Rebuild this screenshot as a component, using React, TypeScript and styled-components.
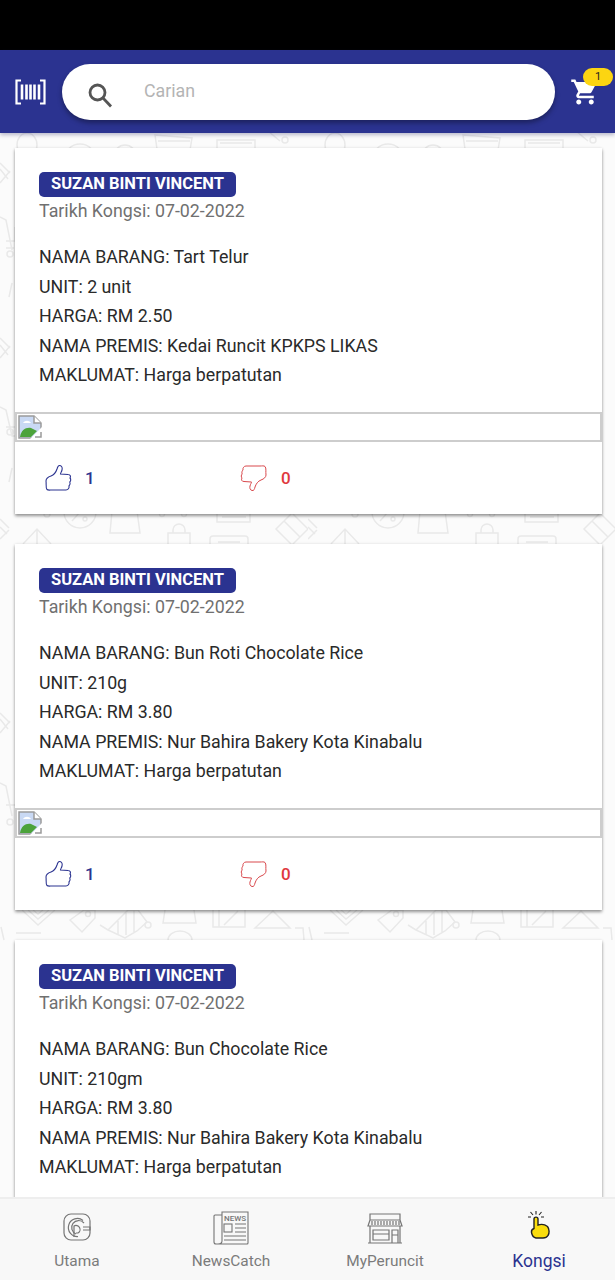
import React from 'react';
import styled, { createGlobalStyle } from 'styled-components';

// wallpaper tile, y = 0 sits right under the header
const pattern = encodeURIComponent(`<svg xmlns="http://www.w3.org/2000/svg" width="308" height="1064" viewBox="0 0 308 1064" fill="none" stroke="#e9e9e9" stroke-width="1.500">
<ellipse cx="27" cy="12" rx="10" ry="12"/><path d="M155 2l37 3-3 18h-31zM158 8h32"/><circle cx="80" cy="27" r="16"/><circle cx="125" cy="23" r="11"/><path d="M217 7h38v20h-38zM220 10h32"/><path d="M268-2l12 10"/><circle cx="285" cy="7" r="3"/>
<path d="M0 30l10 10M0 50l10-12M0 36l8 10"/><path d="M0 84l6 3 6 30M6 108h9v-14M6 115h8"/><circle cx="10" cy="121" r="3"/><path d="M12 150l-3 14"/>
<path d="M0 205l10 10M0 225l10-12M0 212l8 10"/><path d="M0 274l6 3 6 26h4M6 294h9"/><circle cx="10" cy="299" r="3"/><path d="M12 335l-3 14"/>
<circle cx="80" cy="379" r="16"/><path d="M72 388l16-18"/><circle cx="75" cy="376" r="2"/><circle cx="85" cy="386" r="2"/><path d="M112 378l-2 22h30l-3-22"/><circle cx="47" cy="381" r="3"/><circle cx="162" cy="381" r="2.500"/><circle cx="184" cy="381" r="2.500"/><path d="M217 378v11h33v-11M222 384h24"/>
<path d="M0 386l9 9M0 406l9-9M0 394l7 7"/>
<path d="M23 411l14-15 14 15M37 397v14"/><path d="M168 411v-11h22v11M173 400v-3a6 6 0 0 1 12 0v3"/><path d="M210 411v-5q0-3 3-3h32q3 0 3 3v5M218 409h22"/>
<path d="M276 396l16-16 16 16-16 16zM284 388l16 16M292 380l-8 8"/>
<path d="M0 580l10 10M0 600l10-12M0 586l8 10"/><path d="M0 650l6 3 6 30M6 672h9"/><circle cx="10" cy="689" r="3"/>
<path d="M22 777l16 15 17-15M28 777l10 9 11-9M33 777l5 4 5-4"/><path d="M70 787l12 12 13-14v-8h-11z"/><circle cx="88" cy="781" r="2.500"/>
<path d="M100 792l8 5M108 797l20-20h10l9 12-10 9-12 7zM118 788v14M126 780v22M134 777v22"/><circle cx="148" cy="792" r="3"/><path d="M165 777l-2 13h33l-2-13"/><path d="M213 777v17h32v-17M219 777v17M224 792l14-14"/><path d="M255 795l18-17 17 17z"/>
<path d="M1 794l3 13M16 800h25M295 795h8l1 12"/><path d="M168 807a12 9 0 0 1 24 0"/></svg>`);

const GlobalStyle = createGlobalStyle`
  html, body {
    margin: 0;
    padding: 0;
    background: #fafafa;
    font-family: Roboto, "Liberation Sans", sans-serif;
  }
`;

const Screen = styled.div`
  width: 615px;
  height: 1280px;
  display: flex;
  flex-direction: column;
  overflow: hidden;
`;

const StatusBar = styled.div`
  height: 50px;
  flex: none;
  background: #000;
`;

const Header = styled.header`
  height: 83px;
  flex: none;
  display: flex;
  align-items: center;
  padding: 0 3px 0 15px;
  box-sizing: border-box;
  background: #2b3390;
  box-shadow: 0 2px 4px rgba(30, 30, 90, 0.3);
  position: relative;
  z-index: 2;
`;

const SearchPill = styled.div`
  width: 493px;
  height: 56px;
  margin: 1px 15px 0 16px;
  display: flex;
  align-items: center;
  padding: 5px 0 0 25px;
  box-sizing: border-box;
  border-radius: 28px;
  background: #fff;
  box-shadow: 0 3px 5px rgba(0, 0, 0, 0.35);
`;

const Placeholder = styled.span`
  margin-left: 31px;
  margin-top: -9px;
  font-size: 17.800px;
  color: #b4b4b4;
`;

const CartWrap = styled.div`
  position: relative;
  width: 42px;
  height: 40px;
  margin-top: -10px;
  display: flex;
  align-items: flex-end;
`;

const CartBadge = styled.span`
  position: absolute;
  top: 1px;
  right: -1px;
  width: 30px;
  height: 18px;
  border-radius: 9px;
  background: #fcd511;
  color: #222;
  font-size: 11px;
  line-height: 18px;
  text-align: center;
`;

const Feed = styled.main`
  flex: 1;
  min-height: 0;
  display: flex;
  flex-direction: column;
  gap: 30px;
  padding: 15px 13px 0 15px;
  overflow: hidden;
  background-color: #fbfbfb;
  background-image: url("data:image/svg+xml,${pattern}");
`;

const Card = styled.article`
  flex: none;
  height: 366px;
  background: #fff;
  box-shadow: 0 2px 3px rgba(0, 0, 0, 0.4), 0 0 3px rgba(0, 0, 0, 0.08);
`;

const CardBody = styled.div`
  height: 264px;
  padding: 24px 24px 0;
  box-sizing: border-box;
`;

const NameBadge = styled.span`
  display: inline-block;
  height: 25px;
  padding: 0 12px;
  border-radius: 5px;
  background: #2b3390;
  color: #fff;
  font-size: 16.500px;
  font-weight: 700;
  line-height: 24px;
`;

const SharedDate = styled.div`
  font-size: 17.800px;
  line-height: 27px;
  color: #707070;
`;

const Details = styled.div`
  margin-top: 18px;
`;

const DetailRow = styled.div`
  font-size: 17.800px;
  line-height: 29.600px;
  color: #2a2a2a;
`;

const BrokenImage = styled.div`
  height: 30px;
  box-sizing: border-box;
  border: 2px solid #cdcdcd;
  display: flex;
  align-items: flex-start;
  padding: 1px 0 0 1px;
`;

const Votes = styled.div`
  height: 72px;
  display: flex;
  align-items: center;
  padding-left: 29px;
`;

const Vote = styled.div<{ $color: string }>`
  width: 196px;
  display: flex;
  align-items: center;
  gap: 13px;
  color: ${p => p.$color};
  font-size: 17px;
  font-weight: 500;
`;

const BottomNav = styled.nav`
  height: 83px;
  flex: none;
  display: grid;
  grid-template-columns: repeat(4, 154px);
  justify-content: start;
  background: #f8f8f8;
  border-top: 2px solid #eeeeee;
  box-sizing: border-box;
  position: relative;
  z-index: 2;
`;

const NavItem = styled.div<{ $active?: boolean }>`
  display: flex;
  flex-direction: column;
  align-items: center;
  color: ${p => (p.$active ? '#2b3390' : '#7b7b7b')};
  font-size: ${p => (p.$active ? '17.500px' : '15.400px')};
`;

const NavIcon = styled.div<{ $top: number }>`
  height: 51px;
  padding-top: ${p => p.$top}px;
  box-sizing: border-box;
`;

const NavLabel = styled.span`
  line-height: 22px;
`;

const BarcodeIcon = () => (
  <svg width="31" height="26" viewBox="0 0 31 26" fill="none" stroke="#fff" strokeWidth="2.200">
    <path d="M6 1.500H1.500v23H6M25 1.500h4.500v23H25" />
    <path d="M7 5.500v15M11.500 5.500v15M15.500 5.500v15M19.500 5.500v15M24 5.500v15" strokeWidth="2.600" />
  </svg>
);

const SearchIcon = () => (
  <svg width="26" height="26" viewBox="0 0 26 26" fill="none" stroke="#555" strokeWidth="2.800">
    <circle cx="10.500" cy="10.500" r="7.500" />
    <path d="M16 16l8 8.500" />
  </svg>
);

const CartIcon = () => (
  <svg width="30" height="30" viewBox="0 0 24 24" fill="#fff">
    <path d="M7 18c-1.100 0-1.990.900-1.990 2S5.900 22 7 22s2-.900 2-2-.900-2-2-2zM1 2v2h2l3.600 7.590-1.350 2.450c-.160.280-.250.610-.250.960 0 1.100.900 2 2 2h12v-2H7.420c-.140 0-.250-.110-.250-.250l.030-.120.900-1.630h7.450c.750 0 1.410-.410 1.750-1.030l3.580-6.490A1 1 0 0 0 20 4H5.210l-.940-2H1zm16 16c-1.100 0-1.990.900-1.990 2s.890 2 1.990 2 2-.900 2-2-.900-2-2-2z" />
  </svg>
);

const BrokenPicture = () => (
  <svg width="24" height="24" viewBox="0 0 24 24">
    <path d="M1 1h15l7 7v15H1z" fill="#c9d9f4" stroke="#9a9a9a" strokeWidth="1.500" />
    <path d="M16 1v7h7" fill="#fff" stroke="#9a9a9a" strokeWidth="1.500" />
    <path d="M5 8c2-3 6-3 8 0z" fill="#fff" />
    <path d="M2 22c1-7 6-10 11-9l6 3-6 6z" fill="#4ca33b" />
    <path d="M12 24L24 12v12z" fill="#fff" />
    <path d="M17 22h6v-5" fill="none" stroke="#9a9a9a" strokeWidth="1.500" />
  </svg>
);

const thumbPath =
  'M2 17C2 15 4 13 7 12C10 11 12 8 13 5C13.500 3 14 1 16 1.500C18 2 18.500 4 18 6C17.500 8 16.500 9 16.500 10L24 10.500C26.500 10.500 27 12.500 26 14C27 15 27 17 25.800 18C26.500 19.500 26 21 25 22C25.500 24 24 26 22 26L8 26C6 26 4 26.500 3 25.500C1.500 24 2.500 20 2 17Z';

const ThumbUp = () => (
  <svg width="28" height="28" viewBox="0 0 28 28" fill="none" stroke="#2b3390" strokeWidth="1.100">
    <path d={thumbPath} />
  </svg>
);

const ThumbDown = () => (
  <svg width="28" height="28" viewBox="0 0 28 28" fill="none" stroke="#d9484c" strokeWidth="1">
    <path d={thumbPath} transform="rotate(180 14 14)" />
  </svg>
);

const UtamaIcon = () => (
  <svg width="28" height="28" viewBox="0 0 28 28" fill="none" stroke="#757575" strokeWidth="1.200">
    <rect x="1" y="1" width="26" height="26" rx="7" />
    <path d="M20 7.500a9 9 0 1 0-5 16" />
    <path d="M21 10a7 7 0 1 0-8 11" />
    <path d="M11 24V13a4 4 0 1 1 4 7h-2" />
    <path d="M20 14h7v3h-7" />
  </svg>
);

const NewsIcon = () => (
  <svg width="36" height="34" viewBox="0 0 36 34" fill="none" stroke="#757575" strokeWidth="1.100">
    <path d="M9 4H2a1 1 0 0 0-1 1v26c0 1 1 2 2 2h31a1 1 0 0 0 1-1V1H9v29c0 2-2 3-4 3" />
    <rect x="11" y="13" width="8" height="8" />
    <path d="M22 13h11M22 17h11M22 21h11M11 25h22M11 29h22" />
    <text x="11" y="10" fontFamily="Roboto, sans-serif" fontSize="8" fontWeight="500" stroke="none" fill="#757575" textLength="22">NEWS</text>
  </svg>
);

const ShopIcon = () => (
  <svg width="36" height="31" viewBox="0 0 36 31" fill="none" stroke="#757575" strokeWidth="1.200">
    <path d="M3 1h30v6H3zM3 7L1 13h34l-2-6M3 13v17h30V13M1 30h34" />
    <path d="M5 8v4M8 8v4M11 8v4M14 8v4M17 8v4M20 8v4M23 8v4M26 8v4M29 8v4M32 8v4" />
    <path d="M6 17h16v10H6zM6 21h16M25 30V17h6v13M25 22h6" />
  </svg>
);

const HandIcon = () => (
  <svg width="23" height="29" viewBox="0 0 23 29">
    <path d="M8 28c-2.500-.5-4-3-4.500-5.500-.3-2 .8-3.500 2.500-4V9c0-2.500 4-2.500 4 0v6c3-1 7-.5 9.500 1.500 2 2.500 2 7 .5 9-1 1.700-3 2.500-5 2.500z" fill="#f9dc0c" stroke="#222" strokeWidth="1.400" />
    <path d="M8 1v3.500M2.500 2l2.500 3M13.500 2L11 5M0 7h3M13 7h3" stroke="#222" strokeWidth="1.100" fill="none" />
  </svg>
);

const posts = [
  { item: 'Tart Telur', unit: '2 unit', price: 'RM 2.50', shop: 'Kedai Runcit KPKPS LIKAS', cut: false },
  { item: 'Bun Roti Chocolate Rice', unit: '210g', price: 'RM 3.80', shop: 'Nur Bahira Bakery Kota Kinabalu', cut: false },
  // last card runs under the nav, its footer is never seen
  { item: 'Bun Chocolate Rice', unit: '210gm', price: 'RM 3.80', shop: 'Nur Bahira Bakery Kota Kinabalu', cut: true },
];

const App = () => (
  <Screen>
    <GlobalStyle />
    <StatusBar />
    <Header>
      <BarcodeIcon />
      <SearchPill>
        <SearchIcon />
        <Placeholder>Carian</Placeholder>
      </SearchPill>
      <CartWrap>
        <CartIcon />
        <CartBadge>1</CartBadge>
      </CartWrap>
    </Header>
    <Feed>
      {posts.map(post => (
        <Card key={post.item}>
          <CardBody>
            <NameBadge>SUZAN BINTI VINCENT</NameBadge>
            <SharedDate>Tarikh Kongsi: 07-02-2022</SharedDate>
            <Details>
              <DetailRow>NAMA BARANG: {post.item}</DetailRow>
              <DetailRow>UNIT: {post.unit}</DetailRow>
              <DetailRow>HARGA: {post.price}</DetailRow>
              <DetailRow>NAMA PREMIS: {post.shop}</DetailRow>
              <DetailRow>MAKLUMAT: Harga berpatutan</DetailRow>
            </Details>
          </CardBody>
          {!post.cut && (
            <>
              <BrokenImage>
                <BrokenPicture />
              </BrokenImage>
              <Votes>
                <Vote $color="#2b3390">
                  <ThumbUp />
                  <span>1</span>
                </Vote>
                <Vote $color="#e0393e">
                  <ThumbDown />
                  <span>0</span>
                </Vote>
              </Votes>
            </>
          )}
        </Card>
      ))}
    </Feed>
    <BottomNav>
      <NavItem>
        <NavIcon $top={14}><UtamaIcon /></NavIcon>
        <NavLabel>Utama</NavLabel>
      </NavItem>
      <NavItem>
        <NavIcon $top={12}><NewsIcon /></NavIcon>
        <NavLabel>NewsCatch</NavLabel>
      </NavItem>
      <NavItem>
        <NavIcon $top={14}><ShopIcon /></NavIcon>
        <NavLabel>MyPeruncit</NavLabel>
      </NavItem>
      <NavItem $active>
        <NavIcon $top={11}><HandIcon /></NavIcon>
        <NavLabel>Kongsi</NavLabel>
      </NavItem>
    </BottomNav>
  </Screen>
);

export default App;
